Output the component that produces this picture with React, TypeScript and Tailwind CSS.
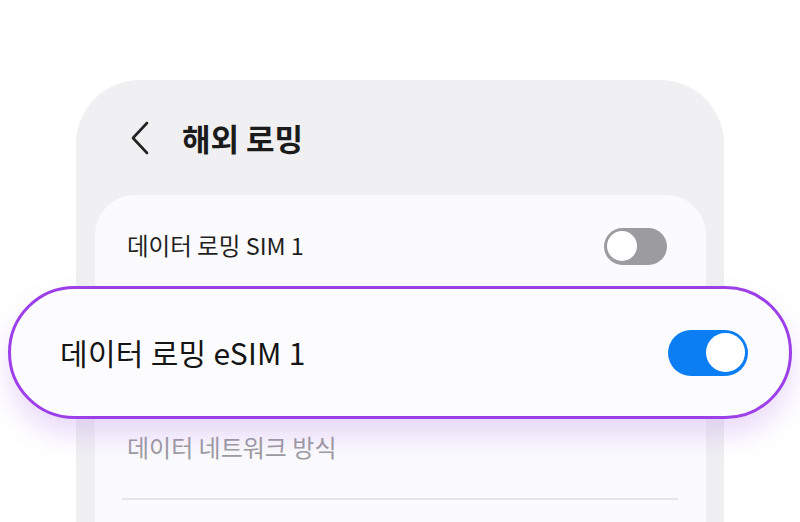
import React, { FC } from 'react';

const font = { fontFamily: '"Noto Sans CJK KR", "Noto Sans", sans-serif' };

// Simple switch, track + knob drawn with divs
const Toggle: FC<{ on: boolean; big?: boolean }> = ({ on, big }) => {
  if (on) {
    return (
      <div className={`flex items-center justify-end rounded-full bg-[#0b7ef3] ${big ? 'w-[80px] h-[46px] pr-[3px]' : 'w-[63px] h-[37px] pr-[2px]'}`}>
        <div className={`rounded-full bg-white ${big ? 'w-[39px] h-[39px]' : 'w-[31px] h-[31px]'}`} />
      </div>
    );
  }
  return (
    <div className="flex items-center justify-start rounded-full bg-[#9b9ba0] w-[63px] h-[37px] pl-[3px]">
      <div className="rounded-full bg-white w-[30px] h-[30px]" />
    </div>
  );
};

const App: FC = () => {
  return (
    <div className="w-[800px] h-[522px] bg-white overflow-hidden pt-[80px] px-[76px]" style={font}>
      <div className="bg-[#f0f0f2] rounded-t-[64px] h-[442px]">
        {/* header */}
        <div className="flex items-center h-[115px] pl-[54px]">
          <svg width="20" height="34" viewBox="0 0 20 34" fill="none">
            <path d="M17 2 L3 17 L17 32" stroke="#222" strokeWidth="2.6" strokeLinecap="round" strokeLinejoin="round" />
          </svg>
          <span className="ml-[32px] text-[31px] font-bold text-[#1b1b1b] leading-none">해외 로밍</span>
        </div>

        {/* card */}
        <div className="ml-[19px] mr-[18px] bg-[#fbfbfd] rounded-t-[40px] pt-[11px] h-[327px]">
          <div className="flex items-center justify-between h-[80px] pl-[32px] pr-[39px]">
            <span className="text-[23.5px] text-[#1f1f1f]">데이터 로밍 SIM 1</span>
            <Toggle on={false} />
          </div>

          {/* highlighted row */}
          <div className="-ml-[87px] -mr-[86px] h-[133px] rounded-full border-[3px] border-[#9c3fe8] bg-[#fcfbfe] flex items-center justify-between pl-[49px] pr-[41px] shadow-[0_16px_28px_rgba(160,90,230,0.22)] relative">
            <span className="text-[30px] text-[#151515] tracking-[0.3px]">데이터 로밍 eSIM 1</span>
            <Toggle on big />
          </div>

          <div className="flex items-center h-[56px] pl-[32px]">
            <span className="text-[24px] text-[#9c9ca2]">데이터 네트워크 방식</span>
          </div>
          <div className="mt-[23px] ml-[27px] mr-[28px] h-[2px] bg-[#e6e6ea]" />
        </div>
      </div>
    </div>
  );
};

export default App;
